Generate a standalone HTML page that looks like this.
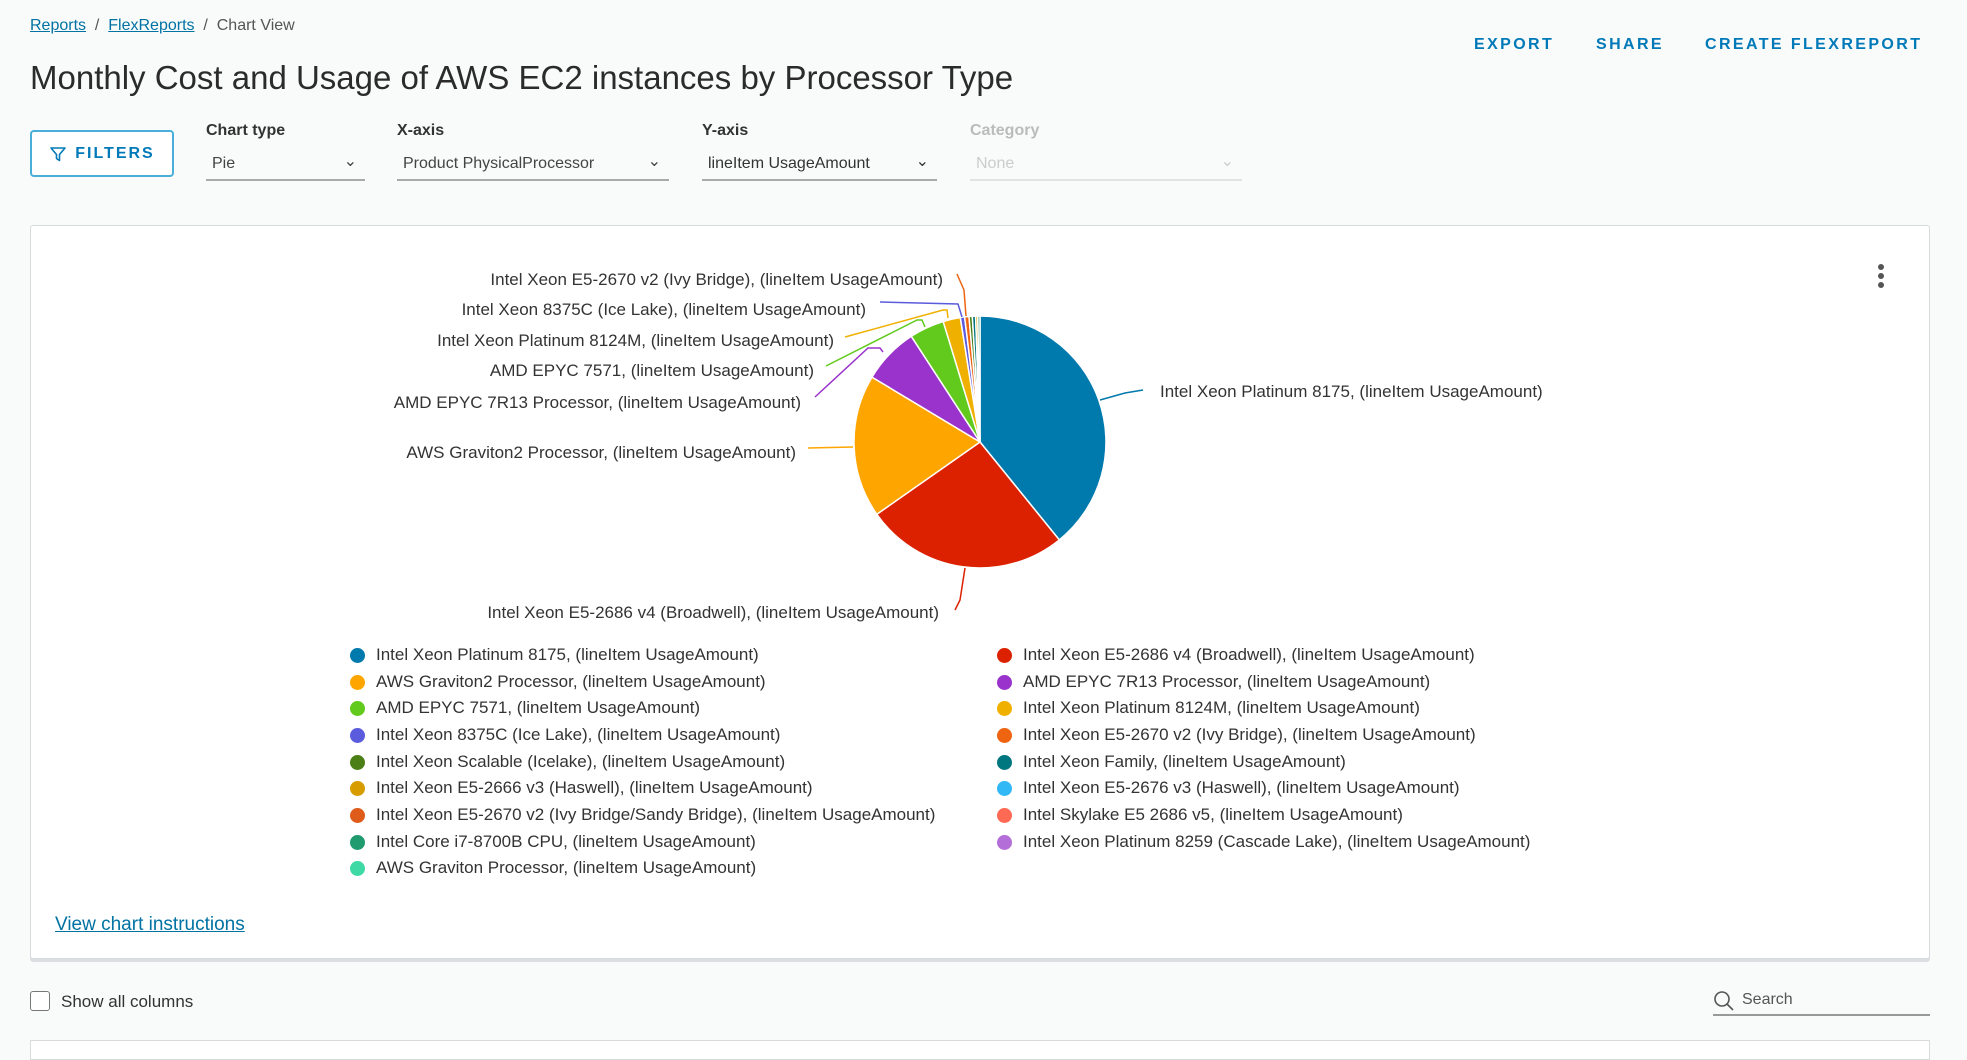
<!DOCTYPE html>
<html><head><meta charset="utf-8">
<style>
*{margin:0;padding:0;box-sizing:border-box}
body{width:1967px;height:1045px;background:#f9fafa;font-family:"Liberation Sans",sans-serif;color:#333;position:relative;overflow:hidden}
.a{position:absolute;white-space:nowrap}
.bc{top:17px;left:30px;font-size:16px;color:#555}
.bc a{color:#0072a3;text-decoration:underline}
h1{position:absolute;left:30px;top:59px;font-size:33px;font-weight:normal;color:#2b2b2b}
.act{top:36px;font-size:16px;font-weight:bold;letter-spacing:2.4px;color:#0079b8}
.fb{left:30px;top:130px;width:144px;height:47px;border:2px solid #49afd9;border-radius:4px;background:#fff;color:#0079b8;font-weight:bold;font-size:16px;letter-spacing:2px;display:flex;align-items:center;justify-content:center;gap:8px}
.lbl{top:122px;font-size:16px;font-weight:bold;color:#333}
.sel{top:155px;height:26px;border-bottom:2px solid #aaa;font-size:16px;color:#444;padding-left:6px}
.sel span{position:absolute;right:8px;top:-4px;font-size:16px}
.card{left:30px;top:225px;width:1900px;height:734px;background:#fff;border:1px solid #d7dbdd;border-radius:3px;box-shadow:0 3px 0 #dcdfe1}
.lg{font-size:17px;color:#333}
.dot{position:absolute;width:15px;height:15px;border-radius:50%}
.pl{font-size:17px;color:#333;text-align:right}
</style></head><body>
<div class="a bc"><a>Reports</a> &nbsp;/&nbsp; <a>FlexReports</a> &nbsp;/&nbsp; Chart View</div>
<h1>Monthly Cost and Usage of AWS EC2 instances by Processor Type</h1>
<div class="a act" style="left:1474px">EXPORT</div>
<div class="a act" style="left:1596px">SHARE</div>
<div class="a act" style="left:1705px">CREATE FLEXREPORT</div>

<div class="a fb"><svg width="18" height="18" viewBox="0 0 18 18"><path d="M2 3h14l-5.5 6.5v6l-3-2v-4z" fill="none" stroke="#0079b8" stroke-width="1.6" stroke-linejoin="round"/></svg>FILTERS</div>

<div class="a lbl" style="left:206px">Chart type</div>
<div class="a sel" style="left:206px;width:159px">Pie<span>&#8964;</span></div>
<div class="a lbl" style="left:397px">X-axis</div>
<div class="a sel" style="left:397px;width:272px">Product PhysicalProcessor<span>&#8964;</span></div>
<div class="a lbl" style="left:702px">Y-axis</div>
<div class="a sel" style="left:702px;width:235px;color:#333">lineItem UsageAmount<span>&#8964;</span></div>
<div class="a lbl" style="left:970px;color:#bbb">Category</div>
<div class="a sel" style="left:970px;width:272px;color:#ccc;border-color:#e3e3e3">None<span>&#8964;</span></div>

<div class="a card"></div>
<svg class="a" style="left:1876px;top:263px" width="10" height="28"><circle cx="5" cy="4" r="3" fill="#555"/><circle cx="5" cy="13" r="3" fill="#555"/><circle cx="5" cy="22" r="3" fill="#555"/></svg>

<svg class="a" style="left:0;top:0" width="1967" height="1045">
<g stroke="#fff" stroke-width="1.5">
<path d="M980 442L980 316A126 126 0 0 1 1059.3 539.9Z" fill="#0079ad"/>
<path d="M980 442L1059.3 539.9A126 126 0 0 1 876.8 514.3Z" fill="#dc2100"/>
<path d="M980 442L876.8 514.3A126 126 0 0 1 872 377.1Z" fill="#ffa500"/>
<path d="M980 442L872 377.1A126 126 0 0 1 911.3 336.3Z" fill="#9933cc"/>
<path d="M980 442L911.3 336.3A126 126 0 0 1 943.2 321.5Z" fill="#62c91d"/>
<path d="M980 442L943.2 321.5A126 126 0 0 1 960.3 317.5Z" fill="#f0b000"/>
<path d="M980 442L960.3 317.5A126 126 0 0 1 964.6 316.9Z" fill="#5b5bdd"/>
<path d="M980 442L964.6 316.9A126 126 0 0 1 969 316.5Z" fill="#ee6411"/>
<path d="M980 442L969 316.5A126 126 0 0 1 972.3 316.2Z" fill="#4d7f17"/>
<path d="M980 442L972.3 316.2A126 126 0 0 1 975.6 316.1Z" fill="#00777f"/>
<path d="M980 442L975.6 316.1A126 126 0 0 1 977.8 316Z" fill="#d69c00"/>
<path d="M980 442L977.8 316A126 126 0 0 1 980 316Z" fill="#1f9b6f"/>
</g>
<g fill="none" stroke-width="1.5">
<path d="M1100 400L1125 393L1143 390" stroke="#0079ad"/>
<path d="M965 568L960 600L955 610" stroke="#dc2100"/>
<path d="M853 447L808 448" stroke="#ffa500"/>
<path d="M883 352L880 348L868 348L815 397" stroke="#9933cc"/>
<path d="M925 327L922 320L917 320L826 366" stroke="#62c91d"/>
<path d="M948 318L947 310L943 310L845 337" stroke="#f0b000"/>
<path d="M962 317L958 304L880 302" stroke="#5b5bdd"/>
<path d="M966 316L964 290L957 274" stroke="#ee6411"/>
</g>
</svg>

<div class="a pl" style="right:1024px;top:270px">Intel Xeon E5-2670 v2 (Ivy Bridge), (lineItem UsageAmount)</div>
<div class="a pl" style="right:1101px;top:300px">Intel Xeon 8375C (Ice Lake), (lineItem UsageAmount)</div>
<div class="a pl" style="right:1133px;top:331px">Intel Xeon Platinum 8124M, (lineItem UsageAmount)</div>
<div class="a pl" style="right:1153px;top:361px">AMD EPYC 7571, (lineItem UsageAmount)</div>
<div class="a pl" style="right:1166px;top:393px">AMD EPYC 7R13 Processor, (lineItem UsageAmount)</div>
<div class="a pl" style="right:1171px;top:443px">AWS Graviton2 Processor, (lineItem UsageAmount)</div>
<div class="a pl" style="right:1028px;top:603px">Intel Xeon E5-2686 v4 (Broadwell), (lineItem UsageAmount)</div>
<div class="a pl" style="left:1160px;top:382px;text-align:left">Intel Xeon Platinum 8175, (lineItem UsageAmount)</div>

<div class="a" style="left:350px;top:645px;width:1300px;height:240px">
<div class="dot" style="left:0;top:3px;background:#0079ad"></div><div class="a lg" style="left:26px;top:0">Intel Xeon Platinum 8175, (lineItem UsageAmount)</div>
<div class="dot" style="left:0;top:30px;background:#ffa500"></div><div class="a lg" style="left:26px;top:27px">AWS Graviton2 Processor, (lineItem UsageAmount)</div>
<div class="dot" style="left:0;top:56px;background:#62c91d"></div><div class="a lg" style="left:26px;top:53px">AMD EPYC 7571, (lineItem UsageAmount)</div>
<div class="dot" style="left:0;top:83px;background:#5b5bdd"></div><div class="a lg" style="left:26px;top:80px">Intel Xeon 8375C (Ice Lake), (lineItem UsageAmount)</div>
<div class="dot" style="left:0;top:110px;background:#4d7f17"></div><div class="a lg" style="left:26px;top:107px">Intel Xeon Scalable (Icelake), (lineItem UsageAmount)</div>
<div class="dot" style="left:0;top:136px;background:#d69c00"></div><div class="a lg" style="left:26px;top:133px">Intel Xeon E5-2666 v3 (Haswell), (lineItem UsageAmount)</div>
<div class="dot" style="left:0;top:163px;background:#de5b1a"></div><div class="a lg" style="left:26px;top:160px">Intel Xeon E5-2670 v2 (Ivy Bridge/Sandy Bridge), (lineItem UsageAmount)</div>
<div class="dot" style="left:0;top:190px;background:#1f9b6f"></div><div class="a lg" style="left:26px;top:187px">Intel Core i7-8700B CPU, (lineItem UsageAmount)</div>
<div class="dot" style="left:0;top:216px;background:#3fd9a5"></div><div class="a lg" style="left:26px;top:213px">AWS Graviton Processor, (lineItem UsageAmount)</div>

<div class="dot" style="left:647px;top:3px;background:#dc2100"></div><div class="a lg" style="left:673px;top:0">Intel Xeon E5-2686 v4 (Broadwell), (lineItem UsageAmount)</div>
<div class="dot" style="left:647px;top:30px;background:#9933cc"></div><div class="a lg" style="left:673px;top:27px">AMD EPYC 7R13 Processor, (lineItem UsageAmount)</div>
<div class="dot" style="left:647px;top:56px;background:#f0b000"></div><div class="a lg" style="left:673px;top:53px">Intel Xeon Platinum 8124M, (lineItem UsageAmount)</div>
<div class="dot" style="left:647px;top:83px;background:#ee6411"></div><div class="a lg" style="left:673px;top:80px">Intel Xeon E5-2670 v2 (Ivy Bridge), (lineItem UsageAmount)</div>
<div class="dot" style="left:647px;top:110px;background:#00777f"></div><div class="a lg" style="left:673px;top:107px">Intel Xeon Family, (lineItem UsageAmount)</div>
<div class="dot" style="left:647px;top:136px;background:#32b8f4"></div><div class="a lg" style="left:673px;top:133px">Intel Xeon E5-2676 v3 (Haswell), (lineItem UsageAmount)</div>
<div class="dot" style="left:647px;top:163px;background:#ff6a55"></div><div class="a lg" style="left:673px;top:160px">Intel Skylake E5 2686 v5, (lineItem UsageAmount)</div>
<div class="dot" style="left:647px;top:190px;background:#b36ed7"></div><div class="a lg" style="left:673px;top:187px">Intel Xeon Platinum 8259 (Cascade Lake), (lineItem UsageAmount)</div>
</div>

<div class="a" style="left:55px;top:914px;font-size:19px;color:#0072a3;text-decoration:underline">View chart instructions</div>

<div class="a" style="left:30px;top:991px;width:20px;height:20px;border:1.5px solid #777;border-radius:3px;background:#fff"></div>
<div class="a" style="left:61px;top:992px;font-size:17px;color:#333">Show all columns</div>
<svg class="a" style="left:1713px;top:990px" width="22" height="22"><circle cx="9" cy="9" r="7" fill="none" stroke="#555" stroke-width="1.6"/><path d="M14 14l6 6" stroke="#555" stroke-width="1.6"/></svg>
<div class="a" style="left:1742px;top:991px;font-size:16px;color:#555">Search</div>
<div class="a" style="left:1713px;top:1014px;width:217px;height:2px;background:#999"></div>
<div class="a" style="left:30px;top:1040px;width:1900px;height:20px;background:#fff;border:1px solid #d7dbdd"></div>
</body></html>
